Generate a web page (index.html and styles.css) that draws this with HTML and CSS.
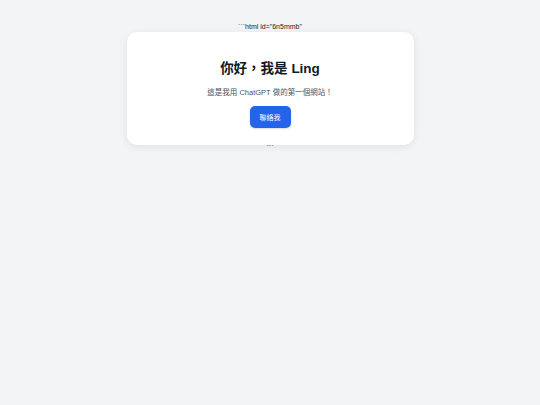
FILE: index.html
```html
<!DOCTYPE html>
<html lang="zh-Hant">
<head>
<meta charset="UTF-8">
<meta name="viewport" content="width=device-width, initial-scale=1.0">
<title>Ling</title>
<link rel="stylesheet" href="styles.css">
</head>
<body>
<div class="page">
  <p class="fence">```html id="6n5mmb"</p>
  <div class="card">
    <h1>你好，我是 Ling</h1>
    <p class="intro">這是我用 ChatGPT 做的第一個網站！</p>
    <button class="contact">聯絡我</button>
  </div>
  <p class="fence">```</p>
</div>
</body>
</html>
```

FILE: styles.css
```css
body {
    margin: 0;
    background: #f3f4f6;
    font-family: "Liberation Sans", "Noto Sans CJK TC", sans-serif;
    color: #111827;
}

.page {
    display: flex;
    flex-direction: column;
    align-items: center;
    padding-top: 22px;
}

.fence {
    margin: 0;
    font-size: 7px;
    line-height: 10px;
    color: #222;
}

.card {
    width: 287px;
    box-sizing: border-box;
    background: white;
    border-radius: 10px;
    box-shadow: 0 2px 8px rgba(0, 0, 0, 0.08);
    padding: 27px 20px 17px;
    text-align: center;
    margin-bottom: -2px;
}

h1 {
    margin: 0;
    font-size: 13.5px;
    line-height: 20px;
    font-weight: bold;
    color: #111827;
}

.intro {
    margin: 8px 0 0;
    font-size: 7.5px;
    line-height: 12px;
    color: #4b5563;
}

.contact {
    margin-top: 7px;
    width: 41px;
    height: 22px;
    padding: 0;
    border: none;
    border-radius: 5px;
    background: #2563eb;
    color: white;
    font-family: inherit;
    font-size: 7px;
    box-shadow: 0 1px 2px rgba(0, 0, 0, 0.15);
}
```
